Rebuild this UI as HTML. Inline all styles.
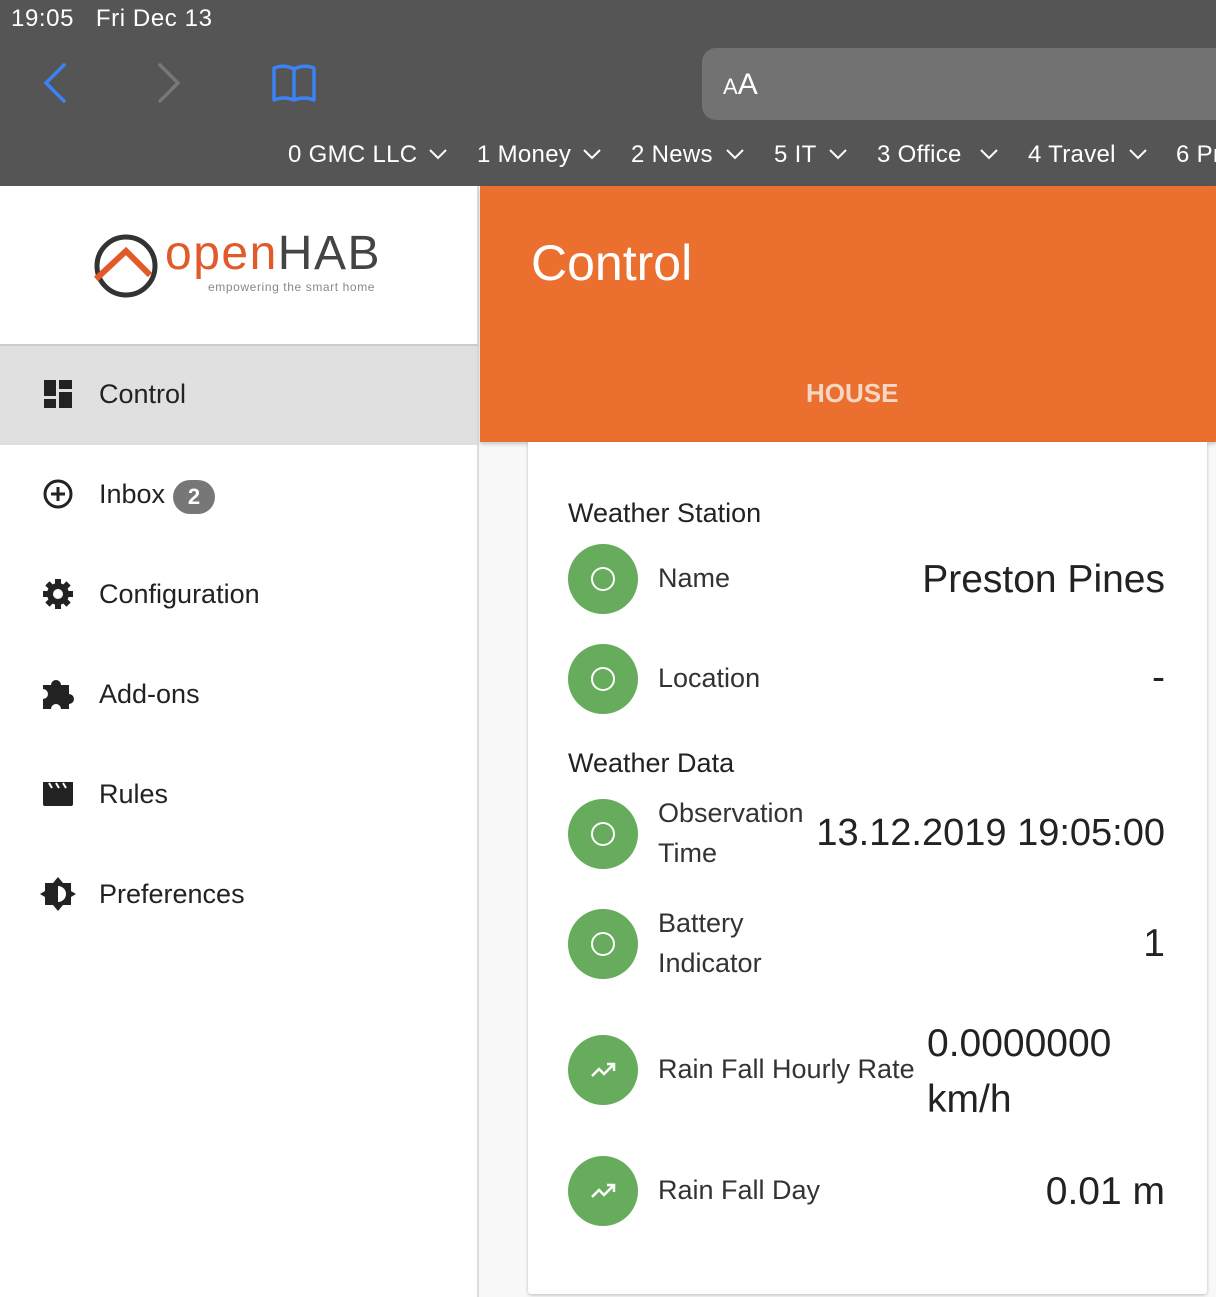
<!DOCTYPE html>
<html><head><meta charset="utf-8">
<style>
*{margin:0;padding:0;box-sizing:border-box}
body{width:1216px;height:1297px;overflow:hidden;position:relative;font-family:"Liberation Sans",sans-serif;background:#f8f8f8;color:#222}
.a{position:absolute;white-space:nowrap}
#top{position:absolute;left:0;top:0;width:1216px;height:186px;background:#555}
.wt{color:#fff}
.tb{position:absolute;top:141px;font-size:24px;color:#fff;white-space:nowrap;letter-spacing:0.3px}
.ch{position:absolute;top:148px}
#side{position:absolute;left:0;top:186px;width:479px;height:1111px;background:#fff;border-right:2px solid #ddd}
.nav{font-size:27px;color:#222}
#hdr{position:absolute;left:480px;top:186px;width:736px;height:256px;background:#eb702f;box-shadow:0 2px 4px rgba(0,0,0,.2)}
#card{position:absolute;left:528px;top:442px;width:679px;height:852px;background:#fff;box-shadow:0 1px 3px rgba(0,0,0,.25);border-radius:0 0 3px 3px}
.g{position:absolute;left:568px;width:70px;height:70px;border-radius:50%;background:#66ac5c}
.g .r{position:absolute;left:23px;top:23px;width:24px;height:24px;border:2.5px solid #fff;border-radius:50%}
.lbl{font-size:27px;color:#333}
.val{font-size:39px;color:#222}
</style></head><body>
<div id="top">
 <div class="a wt" style="left:11px;top:5px;font-size:24px;letter-spacing:0.6px">19:05&nbsp;&nbsp;&nbsp;Fri Dec 13</div>
 <svg class="a" style="left:40px;top:62px" width="30" height="42"><path d="M24 3 L6 21 L24 39" stroke="#3b82f6" stroke-width="3.5" fill="none" stroke-linecap="round"/></svg>
 <svg class="a" style="left:154px;top:62px" width="30" height="42"><path d="M6 3 L24 21 L6 39" stroke="#777" stroke-width="3.5" fill="none" stroke-linecap="round"/></svg>
 <svg class="a" style="left:270px;top:62px" width="50" height="42"><path d="M4 38 V6 Q14 2 24 7 Q34 2 44 6 V38 Q34 34 24 38 Q14 34 4 38 Z M24 7 V38" stroke="#3b82f6" stroke-width="3.5" fill="none" stroke-linejoin="round"/></svg>
 <div class="a" style="left:702px;top:48px;width:540px;height:72px;background:#727272;border-radius:14px"></div>
 <div class="a wt" style="left:723px;top:68px;font-size:30px"><span style="font-size:22px">A</span>A</div>
 <div class="tb" style="left:288px">0 GMC LLC</div>
 <div class="tb" style="left:477px">1 Money</div>
 <div class="tb" style="left:631px">2 News</div>
 <div class="tb" style="left:774px">5 IT</div>
 <div class="tb" style="left:877px">3 Office</div>
 <div class="tb" style="left:1028px">4 Travel</div>
 <div class="tb" style="left:1176px">6 Pr</div>
 <svg class="ch" style="left:428px" width="20" height="12"><path d="M2 2l8 8 8-8" stroke="#fff" stroke-width="2" fill="none"/></svg>
 <svg class="ch" style="left:582px" width="20" height="12"><path d="M2 2l8 8 8-8" stroke="#fff" stroke-width="2" fill="none"/></svg>
 <svg class="ch" style="left:725px" width="20" height="12"><path d="M2 2l8 8 8-8" stroke="#fff" stroke-width="2" fill="none"/></svg>
 <svg class="ch" style="left:828px" width="20" height="12"><path d="M2 2l8 8 8-8" stroke="#fff" stroke-width="2" fill="none"/></svg>
 <svg class="ch" style="left:979px" width="20" height="12"><path d="M2 2l8 8 8-8" stroke="#fff" stroke-width="2" fill="none"/></svg>
 <svg class="ch" style="left:1128px" width="20" height="12"><path d="M2 2l8 8 8-8" stroke="#fff" stroke-width="2" fill="none"/></svg>
</div>
<div id="side">
 <svg class="a" style="left:92px;top:45px" width="70" height="70"><circle cx="34" cy="35" r="29" stroke="#333" stroke-width="5" fill="none"/><path d="M4 48 L34 20 L58 44" stroke="#e15a2a" stroke-width="6" fill="none"/></svg>
 <div class="a" style="left:165px;top:40px;font-size:48px;letter-spacing:1.5px"><span style="color:#e15a2a">open</span><span style="color:#444">HAB</span></div>
 <div class="a" style="left:208px;top:94px;font-size:12px;color:#888;letter-spacing:0.6px">empowering the smart home</div>
 <div class="a" style="left:0;top:158px;width:478px;height:101px;background:#e0e0e0;border-top:2px solid #ccc"></div>
 <svg class="a" style="left:43px;top:193px" width="30" height="30"><path d="M1 1h12v16H1zM16 1h13v9H16zM16 13h13v16H16zM1 20h12v9H1z" fill="#222"/></svg>
 <div class="a nav" style="left:99px;top:193px">Control</div>
 <svg class="a" style="left:42px;top:292px" width="32" height="32"><circle cx="16" cy="16" r="13" stroke="#222" stroke-width="3" fill="none"/><path d="M16 9v14M9 16h14" stroke="#222" stroke-width="3"/></svg>
 <div class="a nav" style="left:99px;top:293px">Inbox</div>
 <div class="a" style="left:173px;top:294px;width:42px;height:34px;border-radius:17px;background:#777;color:#fff;font-size:22px;font-weight:bold;text-align:center;line-height:34px">2</div>
 <svg class="a" style="left:42px;top:392px" width="32" height="32"><g fill="#222"><circle cx="16" cy="16" r="11"/><rect x="13" y="1" width="6" height="30"/><rect x="1" y="13" width="30" height="6"/><rect x="13" y="1" width="6" height="30" transform="rotate(45 16 16)"/><rect x="13" y="1" width="6" height="30" transform="rotate(-45 16 16)"/></g><circle cx="16" cy="16" r="5" fill="#fff"/></svg>
 <div class="a nav" style="left:99px;top:393px">Configuration</div>
 <svg class="a" style="left:42px;top:491px" width="34" height="34"><path d="M1 8h8a5 5 0 0 1 10 0h8v9a5 5 0 0 1 0 10v5H19a5 5 0 0 0-10 0H1V22a5 5 0 0 0 0-10z" fill="#222"/></svg>
 <div class="a nav" style="left:99px;top:493px">Add-ons</div>
 <svg class="a" style="left:42px;top:594px" width="32" height="26"><path d="M1 2h30v22a2 2 0 0 1-2 2H3a2 2 0 0 1-2-2z" fill="#222"/><path d="M7 3l3 5M14 3l3 5M21 3l3 5" stroke="#fff" stroke-width="2"/></svg>
 <div class="a nav" style="left:99px;top:593px">Rules</div>
 <svg class="a" style="left:40px;top:690px" width="36" height="36"><path d="M18 1l5 6 8 0 0 8 5 3-5 3 0 8-8 0-5 6-5-6-8 0 0-8-5-3 5-3 0-8 8 0z" fill="#222"/><path d="M18 10a8 8 0 0 1 0 16z" fill="#fff"/></svg>
 <div class="a nav" style="left:99px;top:693px">Preferences</div>
</div>
<div id="hdr">
 <div class="a" style="left:51px;top:48px;font-size:50px;color:#fff">Control</div>
 <div class="a" style="left:326px;top:192px;font-size:26px;font-weight:bold;color:#f6d7c4">HOUSE</div>
</div>
<div id="card"></div>
<div class="a" style="left:568px;top:498px;font-size:27px">Weather Station</div>
<div class="g" style="top:544px"><div class="r"></div></div>
<div class="a lbl" style="left:658px;top:563px">Name</div>
<div class="a val" style="right:51px;top:558px">Preston Pines</div>
<div class="g" style="top:644px"><div class="r"></div></div>
<div class="a lbl" style="left:658px;top:663px">Location</div>
<div class="a val" style="right:51px;top:656px">-</div>
<div class="a" style="left:568px;top:748px;font-size:27px">Weather Data</div>
<div class="g" style="top:799px"><div class="r"></div></div>
<div class="a lbl" style="left:658px;top:793px;line-height:40px;white-space:normal">Observation<br>Time</div>
<div class="a val" style="right:51px;top:812px;font-size:38px">13.12.2019 19:05:00</div>
<div class="g" style="top:909px"><div class="r"></div></div>
<div class="a lbl" style="left:658px;top:903px;line-height:40px">Battery<br>Indicator</div>
<div class="a val" style="right:51px;top:922px">1</div>
<div class="g" style="top:1035px"><svg style="position:absolute;left:22px;top:26px" width="28" height="18"><path d="M2 15l7-7 5 5 9-9M17 3h7v7" stroke="#fff" stroke-width="2.5" fill="none"/></svg></div>
<div class="a lbl" style="left:658px;top:1054px">Rain Fall Hourly Rate</div>
<div class="a val" style="left:927px;top:1016px;line-height:56px">0.0000000<br>km/h</div>
<div class="g" style="top:1156px"><svg style="position:absolute;left:22px;top:26px" width="28" height="18"><path d="M2 15l7-7 5 5 9-9M17 3h7v7" stroke="#fff" stroke-width="2.5" fill="none"/></svg></div>
<div class="a lbl" style="left:658px;top:1175px">Rain Fall Day</div>
<div class="a val" style="right:51px;top:1170px">0.01 m</div>
</body></html>
